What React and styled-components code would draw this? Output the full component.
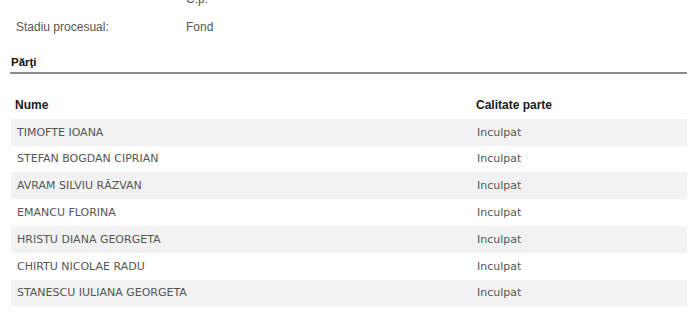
import React from "react";
import styled, { createGlobalStyle } from "styled-components";

const Global = createGlobalStyle`
  html, body { margin: 0; padding: 0; background: #fff; }
  body { font-family: "Liberation Sans", Arial, sans-serif; overflow: hidden; }
`;

const Page = styled.div`
  width: 700px;
  height: 320px;
  overflow: hidden;
`;

const Content = styled.div`
  margin-top: -15px;
  padding: 0 13px 0 10px;
`;

const InfoList = styled.div`
  display: flex;
  flex-direction: column;
  padding-left: 6px;
`;

const InfoRow = styled.div`
  display: grid;
  grid-template-columns: 170px 1fr;
  height: 28px;
  align-items: center;
  font-size: 12px;
  color: #555;
`;

const SectionTitle = styled.div`
  margin-top: 15px;
  padding: 0 0 4px 1px;
  font-size: 11.5px;
  font-weight: bold;
  color: #111;
  border-bottom: 2px solid #8a8a8a;
`;

const Table = styled.div`
  margin: 18px 0 0 1px;
  display: flex;
  flex-direction: column;
`;

const Row = styled.div`
  display: grid;
  grid-template-columns: 465px 1fr;
  height: 26.8px;
  align-items: center;
  background: ${(p) => (p.$shaded ? "#f2f2f2" : "transparent")};
`;

const HeadCell = styled.div`
  font-family: "Liberation Sans", Arial, sans-serif;
  font-size: 12px;
  font-weight: bold;
  color: #1a1a1a;
  padding-left: ${(p) => (p.$first ? "4px" : "0")};
`;

const Cell = styled.div`
  font-family: "DejaVu Sans", Verdana, sans-serif;
  font-size: 11px;
  color: #555;
  padding-left: ${(p) => (p.$first ? "6px" : "1px")};
  white-space: nowrap;
`;

const parties = [
  "TIMOFTE IOANA",
  "STEFAN BOGDAN CIPRIAN",
  "AVRAM SILVIU RĂZVAN",
  "EMANCU FLORINA",
  "HRISTU DIANA GEORGETA",
  "CHIRTU NICOLAE RADU",
  "STANESCU IULIANA GEORGETA",
];

export default function App() {
  return (
    <Page>
      <Global />
      <Content>
        <InfoList>
          <InfoRow>
            <span></span>
            <span>C.p.</span>
          </InfoRow>
          <InfoRow>
            <span>Stadiu procesual:</span>
            <span>Fond</span>
          </InfoRow>
        </InfoList>
        <SectionTitle>Părţi</SectionTitle>
        <Table>
          <Row>
            <HeadCell $first>Nume</HeadCell>
            <HeadCell>Calitate parte</HeadCell>
          </Row>
          {parties.map((name, i) => (
            <Row key={name} $shaded={i % 2 === 0}>
              <Cell $first>{name}</Cell>
              <Cell>Inculpat</Cell>
            </Row>
          ))}
        </Table>
      </Content>
    </Page>
  );
}
